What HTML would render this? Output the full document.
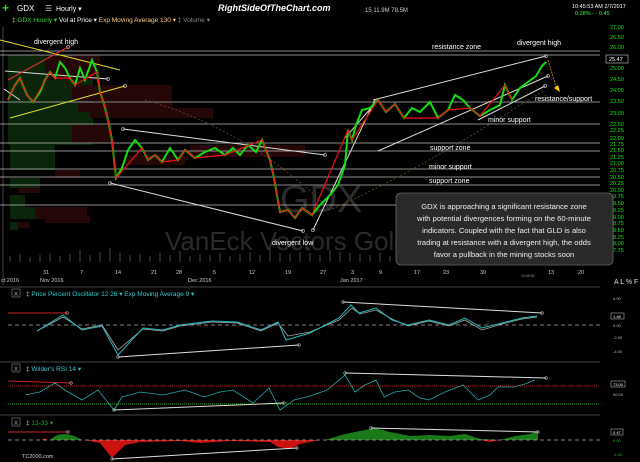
<!DOCTYPE html><html><head><style>
html,body{margin:0;padding:0;background:#000;width:640px;height:462px;overflow:hidden;font-family:"Liberation Sans",sans-serif}
svg{display:block}
</style></head><body>
<svg width="640" height="462" viewBox="0 0 640 462" font-family="Liberation Sans, sans-serif">
<rect width="640" height="462" fill="#000"/>
<!-- header -->
<text x="2" y="12" fill="#3c3" font-size="12" font-weight="bold">+</text>
<text x="17" y="11" fill="#fff" font-size="8">GDX</text>
<text x="45" y="11" fill="#ccc" font-size="8">☰</text>
<text x="56" y="11" fill="#fff" font-size="7">Hourly ▾</text>
<text x="218" y="11" fill="#fff" font-size="9" font-weight="bold" font-style="italic">RightSideOfTheChart.com</text>
<text x="365" y="12" fill="#ccc" font-size="6">15  11.9M  78.5M</text>
<text x="572" y="8" fill="#fff" font-size="5.5">10:45:53 AM 2/7/2017</text>
<text x="575" y="15" fill="#3f3" font-size="5.5">0.28%  -  -  0.45</text>
<text x="12" y="22" fill="#fc6" font-size="6.5">‡ <tspan fill="#3d3">GDX Hourly ▾</tspan> <tspan fill="#fff">Vol at Price ▾</tspan> <tspan fill="#fc8">Exp Moving Average 130 ▾</tspan> <tspan fill="#888">‡ Volume ▾</tspan></text>
<line x1="3" y1="27" x2="3" y2="285" stroke="#444"/>
<!-- volume profile -->
<g opacity="0.9">
<rect x="8" y="55" width="85" height="90" fill="#0c2a0c"/>
<rect x="45" y="55" width="55" height="25" fill="#2a0808"/>
<rect x="72" y="85" width="100" height="16" fill="#2a0808"/>
<rect x="78" y="102" width="95" height="10" fill="#2a0808"/>
<rect x="90" y="108" width="123" height="10" fill="#2a0808"/>
<rect x="72" y="125" width="40" height="18" fill="#2a0808"/>
<rect x="190" y="145" width="115" height="12" fill="#2a0808"/>
<rect x="125" y="155" width="60" height="10" fill="#2a0808"/>
<rect x="10" y="145" width="45" height="25" fill="#0c2a0c"/>
<rect x="55" y="170" width="25" height="8" fill="#2a0808"/>
<rect x="10" y="178" width="30" height="10" fill="#0c2a0c"/>
<rect x="18" y="188" width="22" height="5" fill="#2a0808"/>
<rect x="10" y="195" width="15" height="12" fill="#0c2a0c"/>
<rect x="10" y="207" width="35" height="12" fill="#0c2a0c"/>
<rect x="35" y="207" width="52" height="12" fill="#2a0808"/>
<rect x="45" y="215" width="45" height="8" fill="#2a0808"/>
<rect x="10" y="222" width="8" height="8" fill="#0c2a0c"/>
<rect x="18" y="222" width="12" height="6" fill="#2a0808"/>
</g>
<!-- watermark -->
<text x="280" y="212" fill="#2c2c2c" font-size="38">GDX</text>
<text x="165" y="250" fill="#2a2a2a" font-size="26">VanEck Vectors Gold Mi</text>
<!-- volume -->
<g stroke="#444" stroke-width="1">
<path d="M10 262v-6M20 262v-8M30 262v-5M40 262v-7M50 262v-9M60 262v-6M70 262v-8M80 262v-12M90 262v-7M100 262v-10M110 262v-14M120 262v-9M130 262v-7M140 262v-8M150 262v-6M160 262v-9M170 262v-7M180 262v-11M190 262v-6M200 262v-8M210 262v-7M220 262v-9M230 262v-6M240 262v-8M250 262v-10M260 262v-7M270 262v-13M280 262v-9M290 262v-8M300 262v-10M310 262v-9M320 262v-7M330 262v-12M340 262v-10M350 262v-9M360 262v-8M370 262v-7M380 262v-9M390 262v-6M400 262v-8M410 262v-6M420 262v-7M430 262v-9M440 262v-6M450 262v-8M460 262v-10M470 262v-6M480 262v-8M490 262v-7M500 262v-9M510 262v-10M520 262v-8M530 262v-9M540 262v-8"/>
</g>
<!-- horizontal lines -->
<g stroke="#bbb" stroke-width="0.8">
<line x1="0" y1="51" x2="600" y2="51"/><line x1="0" y1="55" x2="600" y2="55"/>
<line x1="0" y1="102" x2="600" y2="102"/><line x1="0" y1="124" x2="600" y2="124"/>
<line x1="0" y1="143" x2="600" y2="143"/><line x1="0" y1="151" x2="600" y2="151"/>
<line x1="0" y1="169" x2="600" y2="169"/><line x1="0" y1="177" x2="600" y2="177"/>
<line x1="0" y1="185" x2="600" y2="185"/><line x1="0" y1="205" x2="600" y2="205"/>
</g>
<path d="M145 100 Q250 130 330 210 Q420 170 520 105 L545 90" stroke="#6a4a2a" stroke-dasharray="2 2" fill="none" stroke-width="0.8"/>
<!-- trendlines -->
<g stroke="#ddd" stroke-width="1" fill="none">
<line x1="4" y1="89" x2="20" y2="100"/>
<line x1="5" y1="71" x2="108" y2="79"/>
<line x1="123" y1="129" x2="325" y2="155"/>
<line x1="110" y1="183" x2="303" y2="231"/>
<line x1="313" y1="230" x2="375" y2="100"/>
<line x1="373" y1="100" x2="546" y2="56"/>
<line x1="345" y1="138" x2="378" y2="100"/>
<line x1="378" y1="151" x2="548" y2="76"/>
<line x1="478" y1="120" x2="545" y2="86"/>
</g>
<g fill="none" stroke="#aaa" stroke-width="0.8"><circle cx="108" cy="79" r="1.5"/><circle cx="123" cy="129" r="1.5"/><circle cx="110" cy="183" r="1.5"/><circle cx="303" cy="231" r="1.5"/><circle cx="313" cy="230" r="1.5"/><circle cx="546" cy="56" r="1.5"/><circle cx="548" cy="76" r="1.5"/><circle cx="545" cy="86" r="1.5"/><circle cx="325" cy="155" r="1.5"/><circle cx="68" cy="47" r="1.5"/><circle cx="125" cy="86" r="1.5"/></g>
<line x1="0" y1="40" x2="120" y2="70" stroke="#dd3" stroke-width="1"/>
<line x1="10" y1="118" x2="125" y2="86" stroke="#dd3" stroke-width="1"/>
<line x1="8" y1="80" x2="68" y2="47" stroke="#d33" stroke-width="1"/>
<line x1="548" y1="60" x2="557" y2="90" stroke="#d90" stroke-width="0.8" stroke-dasharray="2 1"/>
<path d="M554 88 L560 92 L558 85 Z" fill="#fc0"/>
<!-- price -->
<polyline fill="none" stroke="#1d1" stroke-width="2" points="8,100 15,85 20,78 27,95 33,102 40,92 45,80 50,72 55,78 60,62 65,68 70,78 75,85 80,68 85,80 92,60 97,72 100,92 104,104 108,120 112,140 116,178 122,168 128,150 135,140 142,148 148,160 155,155 162,162 170,148 178,160 185,150 195,158 205,152 215,148 225,155 233,148 240,155 248,145 256,152 262,140 270,160 274,178 280,212 288,210 295,218 302,208 312,215 320,205 330,195 338,185 345,165 348,130 352,140 356,125 362,110 370,108 378,100 386,112 395,104 404,118 412,108 420,112 430,102 438,118 448,110 455,95 463,100 470,108 480,116 490,110 500,105 505,85 512,100 520,88 528,82 536,76 542,66 546,62"/>
<polyline fill="none" stroke="#e11" stroke-width="1.2" points="8,100 15,85 20,78 27,95 33,102 50,72 55,78 70,78 75,85 97,72 100,92 104,104 108,120 112,140 116,178 142,148 148,160 155,155 162,162 178,160 185,150 195,158 225,155 262,140 270,160 274,178 280,212 288,210 295,218 302,208 312,215 348,130 352,140 378,100 386,112 395,104 404,118 438,118 448,110 470,108 480,116 505,85 512,100"/>
<g fill="#fff" font-size="7">
<text x="34" y="44">divergent high</text>
<text x="432" y="49">resistance zone</text>
<text x="517" y="45">divergent high</text>
<text x="535" y="101">resistance/support</text>
<text x="488" y="122">minor support</text>
<text x="430" y="150">support zone</text>
<text x="429" y="169">minor support</text>
<text x="429" y="183">support zone</text>
<text x="272" y="245">divergent low</text>
</g>
<g fill="#1e1" font-size="5.5">
<text x="610" y="29">27.00</text><text x="610" y="39">26.50</text><text x="610" y="49">26.00</text><text x="610" y="70">25.00</text><text x="610" y="81">24.50</text><text x="610" y="92">24.00</text><text x="610" y="103">23.50</text><text x="610" y="115">23.00</text><text x="610" y="126">22.50</text><text x="610" y="132">22.25</text><text x="610" y="140">22.00</text><text x="610" y="146">21.75</text><text x="610" y="152">21.50</text><text x="610" y="159">21.25</text><text x="610" y="165">21.00</text><text x="610" y="172">20.75</text><text x="610" y="179">20.50</text><text x="610" y="185">20.25</text><text x="610" y="192">20.00</text><text x="610" y="198">19.75</text><text x="610" y="205">19.50</text><text x="610" y="212">19.25</text><text x="610" y="219">19.00</text><text x="610" y="225">18.75</text><text x="610" y="232">18.50</text><text x="610" y="239">18.25</text><text x="610" y="245">18.00</text><text x="610" y="252">17.75</text>
</g>
<rect x="606" y="55" width="22" height="8" fill="#000" stroke="#ccc" stroke-width="0.6"/>
<text x="609" y="61" fill="#fff" font-size="5.5">25.47</text>
<!-- textbox -->
<rect x="396" y="193" width="217" height="72" rx="5" fill="#2a2a2a" stroke="#666" stroke-width="0.8"/>
<g fill="#eee" font-size="7.6" text-anchor="middle">
<text x="504" y="209">GDX is approaching a significant resistance zone</text>
<text x="504" y="221">with potential divergences forming on the 60-minute</text>
<text x="504" y="233">indicators. Coupled with the fact that GLD is also</text>
<text x="504" y="245">trading at resistance with a divergent high, the odds</text>
<text x="504" y="257">favor a pullback in the mining stocks soon</text>
</g>
<!-- date axis -->
<g fill="#ccc" font-size="5.5">
<text x="43" y="274">31</text><text x="80" y="274">7</text><text x="115" y="274">14</text><text x="151" y="274">21</text><text x="176" y="274">28</text><text x="213" y="274">5</text><text x="249" y="274">12</text><text x="285" y="274">19</text><text x="320" y="274">27</text><text x="351" y="274">3</text><text x="379" y="274">9</text><text x="414" y="274">17</text><text x="443" y="274">23</text><text x="480" y="274">30</text><text x="548" y="274">13</text><text x="578" y="274">20</text>
<text x="1" y="282">ct 2016</text><text x="40" y="282">Nov 2016</text><text x="188" y="282">Dec 2016</text><text x="340" y="282">Jan 2017</text>
</g>
<text x="521" y="277" fill="#999" font-size="3.5">10:45:50</text>
<text x="614" y="284" fill="#ddd" font-size="7">A <tspan fill="#fff">L</tspan> % F</text>
<g stroke="#444"><line x1="0" y1="287" x2="600" y2="287"/><line x1="0" y1="362" x2="600" y2="362"/><line x1="0" y1="415" x2="600" y2="415"/></g>
<!-- PPO -->
<rect x="12" y="289" width="8" height="8" fill="none" stroke="#888" stroke-width="0.6"/><text x="14" y="296" fill="#aaa" font-size="6">X</text>
<text x="26" y="296" fill="#ccc" font-size="6.5">‡ <tspan fill="#3cc">Price Percent Oscillator 12 26 ▾  Exp Moving Average 9 ▾</tspan></text>
<line x1="8" y1="325" x2="600" y2="325" stroke="#aaa" stroke-dasharray="4 3" stroke-width="0.8"/>
<line x1="8" y1="313" x2="67" y2="313" stroke="#c22"/>
<polyline fill="none" stroke="#aaa" stroke-width="0.8" points="37,331 63,317 82,329 102,325 118,350 143,329 163,331 180,326 212,322 237,323 261,331 278,323 288,336 310,332 339,320 352,308 360,314 376,310 392,319 408,326 429,321 449,326 465,320 482,330 502,324 522,319 537,317"/>
<polyline fill="none" stroke="#2bb" stroke-width="1" points="37,331 63,315 82,330 102,326 118,355 143,328 163,330 180,325 212,321 237,322 261,330 278,322 286,340 310,333 339,318 351,305 359,313 376,308 392,320 408,325 429,320 449,325 465,318 482,328 502,323 522,318 537,316"/>
<line x1="118" y1="357" x2="299" y2="345" stroke="#ddd"/>
<line x1="343" y1="302" x2="542" y2="313" stroke="#ddd"/>
<g fill="none" stroke="#aaa" stroke-width="0.7"><circle cx="67" cy="313" r="1.3"/><circle cx="118" cy="357" r="1.3"/><circle cx="299" cy="345" r="1.3"/><circle cx="343" cy="302" r="1.3"/><circle cx="542" cy="313" r="1.3"/></g>
<g font-size="4" fill="#bbb"><text x="613" y="300">4.00</text><text x="613" y="327">0.00</text><text x="613" y="339">-2.00</text><text x="613" y="353">-4.00</text></g>
<rect x="611" y="313" width="13" height="6" fill="#000" stroke="#ccc" stroke-width="0.5"/><text x="613" y="318" fill="#fff" font-size="4">1.48</text>
<!-- RSI -->
<rect x="12" y="364" width="8" height="8" fill="none" stroke="#888" stroke-width="0.6"/><text x="14" y="371" fill="#aaa" font-size="6">X</text>
<text x="26" y="371" fill="#ccc" font-size="6.5">‡ <tspan fill="#3cc">Wilder's RSI 14 ▾</tspan></text>
<line x1="8" y1="386" x2="600" y2="386" stroke="#a22" stroke-dasharray="1 1"/>
<line x1="8" y1="404" x2="600" y2="404" stroke="#2a2" stroke-dasharray="1 1"/>
<line x1="8" y1="381" x2="71" y2="383" stroke="#c22"/>
<polyline fill="none" stroke="#2aa" stroke-width="0.8" points="25,395 40,392 55,383 65,390 82,400 98,390 114,410 122,397 140,392 163,395 185,390 204,397 220,392 233,390 253,403 269,388 280,410 294,400 310,396 327,390 345,375 355,392 365,385 376,380 384,397 395,392 408,390 420,398 429,400 445,392 463,385 478,400 490,395 498,387 514,387 525,384 535,380"/>
<line x1="114" y1="410" x2="284" y2="403" stroke="#ddd"/>
<line x1="345" y1="373" x2="546" y2="378" stroke="#ddd"/>
<g fill="none" stroke="#aaa" stroke-width="0.7"><circle cx="71" cy="383" r="1.3"/><circle cx="114" cy="410" r="1.3"/><circle cx="284" cy="403" r="1.3"/><circle cx="345" cy="373" r="1.3"/><circle cx="546" cy="378" r="1.3"/></g>
<rect x="611" y="381" width="14" height="6" fill="#000" stroke="#ccc" stroke-width="0.5"/><text x="613" y="386" fill="#fff" font-size="4">73.00</text>
<text x="613" y="396" fill="#bbb" font-size="4">50.00</text>
<!-- 13-33 -->
<rect x="12" y="418" width="8" height="8" fill="none" stroke="#888" stroke-width="0.6"/><text x="14" y="425" fill="#aaa" font-size="6">X</text>
<text x="26" y="425" fill="#ccc" font-size="6.5">‡ <tspan fill="#2a2">13-33 ▾</tspan></text>
<path d="M42 440 L44 438 L48 440 Z" fill="#c11"/>
<path d="M50 440 Q62 428 82 440 Z" fill="#1a7a1a"/>
<path d="M84 440 L100 443 L112 458 L125 445 L140 442 L180 441 L200 443 L230 441 L270 442 L278 447 L290 449 L300 444 L320 440 Z" fill="#c11"/>
<path d="M325 440 L345 434 L360 431 L375 428 L390 432 L410 436 L430 435 L450 436 L465 434 L480 439 L500 440 L515 436 L530 434 L538 431 L538 440 Z" fill="#1a7a1a"/>
<path d="M480 440 L490 442 L500 440 Z" fill="#c11"/>
<line x1="8" y1="440" x2="600" y2="440" stroke="#aaa" stroke-dasharray="4 3" stroke-width="0.8"/>
<line x1="8" y1="432" x2="68" y2="432" stroke="#c22"/>
<line x1="112" y1="459" x2="297" y2="448" stroke="#ddd"/>
<line x1="371" y1="428" x2="538" y2="432" stroke="#ddd"/>
<g fill="none" stroke="#aaa" stroke-width="0.7"><circle cx="68" cy="432" r="1.3"/><circle cx="112" cy="459" r="1.3"/><circle cx="297" cy="448" r="1.3"/><circle cx="371" cy="428" r="1.3"/><circle cx="538" cy="432" r="1.3"/></g>
<rect x="611" y="429" width="12" height="6" fill="#000" stroke="#ccc" stroke-width="0.5"/><text x="613" y="434" fill="#fff" font-size="4">0.47</text>
<text x="613" y="442" fill="#3a3" font-size="4">0.00</text>
<text x="613" y="456" fill="#3a3" font-size="4">-1.00</text>
<text x="22" y="458" fill="#ccc" font-size="5.5">TC2000.com</text>
</svg>
</body></html>
